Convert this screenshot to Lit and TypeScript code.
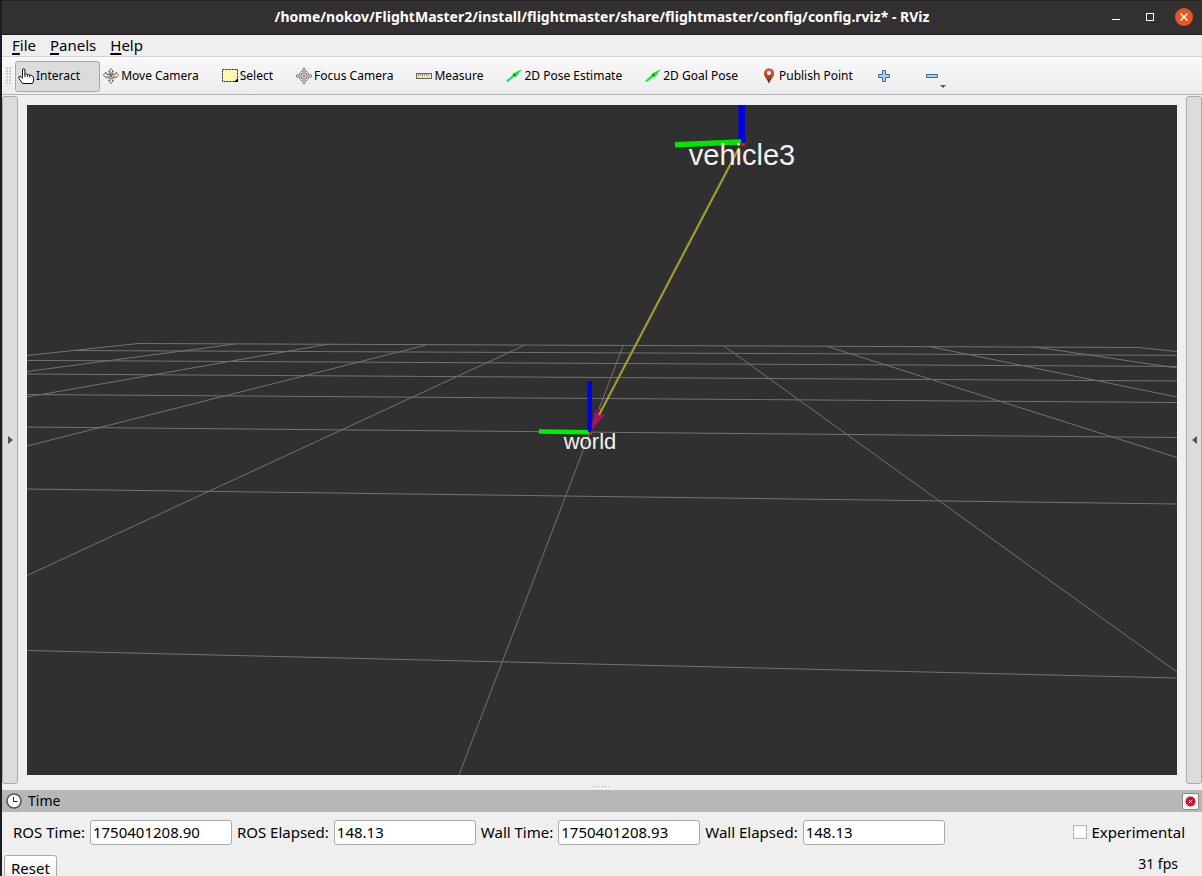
import { LitElement, html, css, svg } from "lit";
import { customElement } from "lit/decorators.js";

type Line = [number, number, number, number];

const GRID_ROWS: Line[] = [
  [138, 343.5, 1138, 347.5],
  [72, 350.5, 1177, 355.3],
  [27, 360.4, 1177, 366.4],
  [27, 374, 1177, 381],
  [27, 394.5, 1177, 402.5],
  [27, 427, 1177, 437.5],
  [27, 489, 1177, 504],
  [27, 650.5, 1177, 678],
];

const GRID_COLUMNS: Line[] = [
  [138, 343.5, 27, 355.5],
  [235, 344, 27, 371.5],
  [329, 344, 27, 397],
  [426, 345, 27, 446],
  [524, 345.5, 27, 575.5],
  [623, 346, 459, 775],
  [724, 346, 1177, 672],
  [826, 346, 1177, 457.5],
  [929, 346.5, 1177, 397],
  [1033, 346.7, 1177, 368],
  [1138, 347.5, 1177, 351.5],
];

const icons = {
  hand: svg`<path d="M4.500 9.500V2q0-1.300 1.200-1.300T6.900 2v4q2-.6 2.400.6 2-.6 2.400.6 2-.4 2.400 1 1.400 0 1.400 1.400V13l-1 2.500H4.500L.8 10q-.4-1.400 1-1.700 1.200 0 2.700 2z" fill="#fff" stroke="#111"/><path d="M6.900 6v3M9.300 7v2M11.700 7.500v2" stroke="#111" fill="none"/>`,
  move: svg`<g fill="#f4f4f4" stroke="#555" stroke-width=".8"><path d="M8 .5l2.500 3H9v2.500l2 .8 2-.8V4l2.600 3-2.600 3V8.800L11 8.600l-2 1.500v2.400h1.500L8 15.500l-2.500-3H7v-2.400L5 8.600l-2 .2V10L.4 7 3 4v2l2 .8L7 6V3.500H5.500z"/><path d="M5 6.800h6M8 5v6M5.500 4.500L8 8l2.500-3.500M4 11l4-3 4 3" fill="none"/></g>`,
  select: svg`<rect x=".5" y="1.500" width="15" height="12" fill="#fbf8b5" stroke="#222" stroke-dasharray="2 1"/><path d="M16 10v4h-4z" fill="#000"/>`,
  focus: svg`<g fill="#eee" stroke="#777" stroke-width=".9"><circle cx="8" cy="8" r="5.300"/><circle cx="8" cy="8" r="3"/><path d="M7 .5h2v5h1.500V7h5v2h-5v1.500H9v5H7v-5H5.500V9h-5V7h5V5.500H7z"/><path d="M5 8h6M8 5v6" fill="none"/></g>`,
  ruler: svg`<rect x=".5" y="5.500" width="15" height="5" fill="#efe2a8" stroke="#666"/><path d="M2.500 6v2M4.500 6v1.500M6.500 6v2M8.500 6v1.500M10.500 6v2M12.500 6v1.500" stroke="#777" stroke-width=".8"/>`,
  arrow: svg`<path d="M.2 12.800L7 6.800 6.600 5.700 16 1 10 9 9.200 8 1.500 14.200z" fill="#0bee35"/><path d="M6.600 5.700l1.200 2L10 9 9 6.500z" fill="#087a20"/>`,
  pin: svg`<defs><linearGradient id="pin-fill" x1="0" y1="0" x2="0" y2="1"><stop offset="0" stop-color="#e8573a"/><stop offset=".5" stop-color="#b8452c"/><stop offset="1" stop-color="#4a2c18"/></linearGradient></defs><path d="M8 .2a5 5 0 0 1 5.100 5.200C13.100 9 9.500 11 8 15.800 6.500 11 2.900 9 2.900 5.400A5 5 0 0 1 8 .2z" fill="url(#pin-fill)"/><circle cx="8" cy="5" r="2" fill="#fff"/>`,
  plus: svg`<path d="M6.500 2.500h3v4h4v3h-4v4h-3v-4h-4v-3h4z" fill="#b4d0ee" stroke="#3568a8"/>`,
  minus: svg`<path d="M2.500 6.500h11v3h-11z" fill="#b4d0ee" stroke="#3568a8"/>`,
  clock: svg`<circle cx="8" cy="8" r="7" fill="#fff" stroke="#555" stroke-width="1.600"/><path d="M7.500 4v4.500h4" stroke="#222" fill="none"/>`,
};

@customElement("tool-icon")
export class ToolIcon extends LitElement {
  static properties = { name: {} };
  declare name: keyof typeof icons;
  static styles = css`
    :host { display: block; flex: none; width: 16px; height: 16px; }
    svg { display: block; }
  `;
  render() {
    return html`<svg width="16" height="16" viewBox="0 0 16 16" aria-hidden="true">${icons[this.name]}</svg>`;
  }
}

@customElement("scene-view")
export class SceneView extends LitElement {
  static styles = css`
    :host { display: block; min-width: 0; min-height: 0; background: #303030; overflow: hidden; }
    .scene { display: block; width: 100%; height: 100%; }
    .label { font-family: "Liberation Sans", Arial, sans-serif; fill: #f0f0f0; text-anchor: middle; }
    .near { font-size: 29px; }
    .far { font-size: 22px; }
    .grid { stroke: #727272; stroke-width: 1; }
  `;
  private line([x1, y1, x2, y2]: Line) {
    return svg`<line x1=${x1} y1=${y1} x2=${x2} y2=${y2} />`;
  }
  render() {
    return html`<svg class="scene" viewBox="27 105 1150 670" preserveAspectRatio="xMidYMid slice" role="img" aria-label="3D view">
      <g class="grid">${GRID_ROWS.map(this.line)}${GRID_COLUMNS.map(this.line)}</g>
      <line x1="740" y1="146" x2="599" y2="415" stroke="#a09c32" stroke-width="2.200" />
      <path d="M590.500 431L595 411l4-1.500 5.500 6z" fill="#a5155a" />
      <path d="M595 411l2.500-1.500 3 1.500 4 4-4 1-3-2z" fill="#8c104c" />
      <path d="M599 415l3-6" stroke="#a09c32" stroke-width="2.200" />
      <path d="M589.800 381v50" stroke="#0000e8" stroke-width="4.600" />
      <path d="M539 431.500l51 .7" stroke="#00f000" stroke-width="4.600" />
      <rect x="589" y="431" width="3" height="4" fill="#e81818" />
      <rect x="588" y="429" width="3" height="3" fill="#0000e8" />
      <path d="M741.800 105v38" stroke="#0000e0" stroke-width="6.600" />
      <path d="M675 144.800l66-2.800" stroke="#00e600" stroke-width="5.600" />
      <path d="M738 144l4-2 2 2-5 4z" fill="#101010" />
      <rect x="741" y="143" width="4" height="3" fill="#e81818" />
      <text class="label near" x="742" y="165">vehicle3</text>
      <text class="label far" x="590" y="449">world</text>
    </svg>`;
  }
}

const TOOLS: { icon: keyof typeof icons; label: string; active?: boolean }[] = [
  { icon: "hand", label: "Interact", active: true },
  { icon: "move", label: "Move Camera" },
  { icon: "select", label: "Select" },
  { icon: "focus", label: "Focus Camera" },
  { icon: "ruler", label: "Measure" },
  { icon: "arrow", label: "2D Pose Estimate" },
  { icon: "arrow", label: "2D Goal Pose" },
  { icon: "pin", label: "Publish Point" },
];

const FIELDS = [
  { id: "ros-time", label: "ROS Time:", value: "1750401208.90" },
  { id: "ros-elapsed", label: "ROS Elapsed:", value: "148.13" },
  { id: "wall-time", label: "Wall Time:", value: "1750401208.93" },
  { id: "wall-elapsed", label: "Wall Elapsed:", value: "148.13" },
];

@customElement("app-root")
export class AppRoot extends LitElement {
  static styles = css`
    :host {
      display: flex; flex-direction: column; box-sizing: border-box;
      height: 100vh; overflow: hidden; border-left: 2px solid #1a1b26;
      background: #efefef; color: #000;
      font: 15px/20px "Noto Sans", "Open Sans", sans-serif;
    }
    * { box-sizing: border-box; }
    button, input { font: inherit; color: inherit; margin: 0; }
    button { background: none; border: 0; padding: 0; }

    .titlebar {
      display: grid; grid-template-columns: 1fr auto 1fr; align-items: center; flex: none;
      height: 35px; padding-bottom: 2px; background: #323031; color: #fff;
      border-top: 1px solid #232122; border-bottom: 1px solid #1f1d1e;
    }
    .title { grid-column: 2; margin: 0; font-size: 14px; line-height: 20px; font-weight: 700; white-space: nowrap; }
    .controls { display: flex; justify-content: flex-end; align-items: center; gap: 16px; padding-right: 9px; }
    .control { display: grid; place-items: center; width: 18px; height: 18px; }
    .control svg { display: block; }

    .menubar { display: flex; align-items: flex-start; flex: none; gap: 14px; height: 22px; padding: 0 10px; border-bottom: 1px solid #d2d2d2; }
    .menubar u { text-underline-offset: 2px; text-decoration-thickness: 2px; }

    .toolbar {
      display: flex; align-items: center; flex: none; height: 38px; padding: 1px 0 0 4px;
      background: linear-gradient(#f9f9f9, #ececec); border-bottom: 1px solid #b4b4b4;
      font-size: 12px; line-height: 16px;
    }
    .grip { flex: none; width: 6px; height: 18px; margin-right: 3px; background: radial-gradient(circle at 1px 1px, #ccc 1px, transparent 1px) 0 0 / 3px 3px; }
    .tool {
      display: flex; align-items: center; gap: 2px; height: 31px; padding: 0 19px 0 2px;
      border: 1px solid transparent; border-radius: 3px; white-space: nowrap;
    }
    .tool.active { background: #dcdcdc; border-color: #a8a8a8; }
    .small { padding: 0 28px 0 2px; gap: 0; }
    .caret { align-self: flex-end; margin-bottom: 3px; border: 3px solid transparent; border-top-color: #555; border-bottom: 0; }

    .workspace { display: grid; grid-template-columns: 16px 1fr 16px; gap: 9px; flex: 1; min-height: 0; padding-top: 1px; }
    .side { display: grid; place-items: center; background: #dcdcdc; border: 1px solid #aaa; border-radius: 3px; }
    .viewport { margin: 9px 0; }
    .right, .left { width: 0; height: 0; border: 4px solid transparent; }
    .right { border-left: 5px solid #505050; border-right: 0; }
    .left { border-right: 5px solid #505050; border-left: 0; }

    .splitter { display: grid; justify-items: center; flex: none; height: 6px; padding-top: 2px; }
    .dots { width: 18px; height: 1px; background: repeating-linear-gradient(90deg, #b0b0b0 0 1px, transparent 1px 3px); }

    .panel-title { display: flex; align-items: center; gap: 6px; flex: none; height: 22px; padding: 0 3px 0 4px; background: #b7b7b7; }
    .panel-title h2 { flex: 1; margin: 0; font-size: 14px; line-height: 20px; font-weight: 400; }
    .close { display: grid; place-items: center; width: 17px; height: 17px; background: #f6f6f6; border: 1px solid #8a8a8a; border-radius: 2px; }

    .fields { display: flex; align-items: center; flex: none; gap: 5px; height: 40px; padding: 0 17px 0 11px; white-space: nowrap; }
    .field { width: 142px; height: 25px; padding: 0 2px; background: #fff; border: 1px solid #aaa; border-radius: 3px; }
    .check { display: flex; align-items: center; gap: 5px; margin-left: auto; }
    .check input { appearance: none; width: 14px; height: 14px; background: #fff; border: 1px solid #b4b4b4; }

    .status { display: flex; align-items: flex-start; justify-content: space-between; flex: none; height: 24px; padding: 2px 24px 0 2px; }
    .reset { flex: none; height: 26px; margin-top: 1px; padding: 4px 6px; line-height: 16px; background: linear-gradient(#fff, #ededed); border: 1px solid #aaa; border-radius: 3px; }
    .fps { font-size: 14px; }
  `;

  render() {
    return html`
      <header class="titlebar">
        <h1 class="title">/home/nokov/FlightMaster2/install/flightmaster/share/flightmaster/config/config.rviz* - RViz</h1>
        <div class="controls">
          <button class="control" aria-label="Minimize"><svg width="8" height="8"><path d="M0 6.500h8" stroke="#fff" /></svg></button>
          <button class="control" aria-label="Maximize"><svg width="8" height="8"><rect x=".5" y=".5" width="7" height="7" fill="none" stroke="#fff" /></svg></button>
          <button class="control" aria-label="Close"><svg width="18" height="18"><circle cx="9" cy="9" r="9" fill="#e95420" /><path d="M5.500 5.500l7 7m0-7l-7 7" stroke="#fff" stroke-width="1.500" /></svg></button>
        </div>
      </header>
      <nav class="menubar" aria-label="Main menu">
        <button><u>F</u>ile</button><button><u>P</u>anels</button><button><u>H</u>elp</button>
      </nav>
      <div class="toolbar" role="toolbar">
        <span class="grip"></span>
        ${TOOLS.map((t) => html`<button class="tool ${t.active ? "active" : ""}" aria-pressed=${t.active ? "true" : "false"}><tool-icon .name=${t.icon}></tool-icon>${t.label}</button>`)}
        <button class="tool small" aria-label="Add tool"><tool-icon .name=${"plus"}></tool-icon></button>
        <button class="tool small" aria-label="Remove tool"><tool-icon .name=${"minus"}></tool-icon><span class="caret"></span></button>
      </div>
      <main class="workspace">
        <button class="side" aria-label="Show left panels"><span class="right"></span></button>
        <scene-view class="viewport"></scene-view>
        <button class="side" aria-label="Show right panels"><span class="left"></span></button>
      </main>
      <div class="splitter"><span class="dots"></span></div>
      <section class="panel-title">
        <tool-icon .name=${"clock"}></tool-icon>
        <h2>Time</h2>
        <button class="close" aria-label="Close panel"><svg width="11" height="11"><circle cx="5.500" cy="5.500" r="5" fill="#c4162c" /><path d="M3.800 3.800l3.400 3.400m0-3.400L3.800 7.200" stroke="#fff" /></svg></button>
      </section>
      <section class="fields">
        ${FIELDS.map((f) => html`<label for=${f.id}>${f.label}</label><input class="field" id=${f.id} .value=${f.value} readonly />`)}
        <label class="check"><input type="checkbox" />Experimental</label>
      </section>
      <footer class="status"><button class="reset">Reset</button><output class="fps">31 fps</output></footer>
    `;
  }
}
